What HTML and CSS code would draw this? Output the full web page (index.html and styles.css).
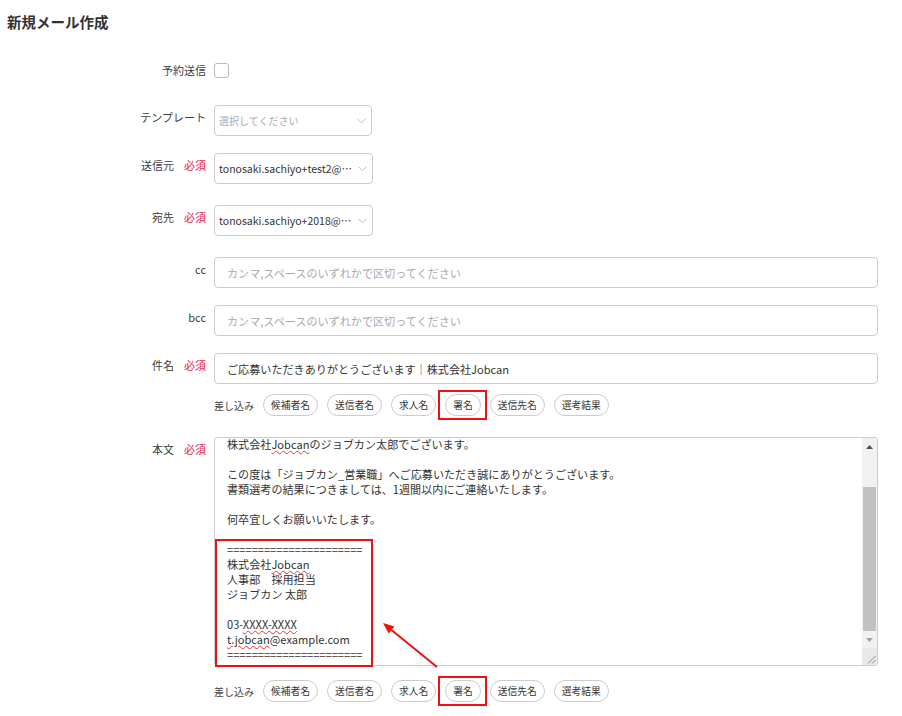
FILE: index.html
```html
<!DOCTYPE html>
<html lang="ja">
<head>
<meta charset="utf-8">
<title>新規メール作成</title>
<link rel="stylesheet" href="styles.css">
</head>
<body>
<div class="page">
  <h1 class="title">新規メール作成</h1>
  <div class="form">
    <div class="row row-check mt-31">
      <div class="label">予約送信</div>
      <div class="field"><span class="checkbox"></span></div>
    </div>

    <div class="row mt-27">
      <div class="label">テンプレート</div>
      <div class="field">
        <div class="select select-template">
          <span class="select-text placeholder small">選択してください</span>
          <svg class="chevron" width="9" height="6" viewBox="0 0 9 6"><polyline points="0.5,0.8 4.5,4.8 8.5,0.8" fill="none" stroke="#bbb" stroke-width="1"/></svg>
        </div>
      </div>
    </div>

    <div class="row mt-17">
      <div class="label">送信元<span class="req">必須</span></div>
      <div class="field">
        <div class="select">
          <span class="select-text">tonosaki.sachiyo+test2@example.com</span>
          <svg class="chevron" width="9" height="6" viewBox="0 0 9 6"><polyline points="0.5,0.8 4.5,4.8 8.5,0.8" fill="none" stroke="#bbb" stroke-width="1"/></svg>
        </div>
      </div>
    </div>

    <div class="row mt-21">
      <div class="label">宛先<span class="req">必須</span></div>
      <div class="field">
        <div class="select">
          <span class="select-text">tonosaki.sachiyo+2018@dummy.example.com</span>
          <svg class="chevron" width="9" height="6" viewBox="0 0 9 6"><polyline points="0.5,0.8 4.5,4.8 8.5,0.8" fill="none" stroke="#bbb" stroke-width="1"/></svg>
        </div>
      </div>
    </div>

    <div class="row mt-21">
      <div class="label">cc</div>
      <div class="field"><div class="input placeholder">カンマ,スペースのいずれかで区切ってください</div></div>
    </div>

    <div class="row mt-17">
      <div class="label">bcc</div>
      <div class="field"><div class="input placeholder">カンマ,スペースのいずれかで区切ってください</div></div>
    </div>

    <div class="row mt-17">
      <div class="label">件名<span class="req">必須</span></div>
      <div class="field"><div class="input">ご応募いただきありがとうございます｜株式会社Jobcan</div></div>
    </div>

    <div class="row mt-10">
      <div class="label"></div>
      <div class="field">
        <div class="inserts">
          <span class="inserts-label">差し込み</span>
          <span class="pill">候補者名</span>
          <span class="pill">送信者名</span>
          <span class="pill">求人名</span>
          <span class="pill marked">署名</span>
          <span class="pill">送信先名</span>
          <span class="pill">選考結果</span>
        </div>
      </div>
    </div>

    <div class="row mt-21">
      <div class="label">本文<span class="req">必須</span></div>
      <div class="field">
        <div class="body-wrap">
          <div class="textarea">
            <div class="textarea-content">
              <div class="lines">
                <div class="line">株式会社<span class="spell">Jobcan</span>のジョブカン太郎でございます。</div>
                <div class="line"></div>
                <div class="line">この度は「ジョブカン_営業職」へご応募いただき誠にありがとうございます。</div>
                <div class="line">書類選考の結果につきましては、1週間以内にご連絡いたします。</div>
                <div class="line"></div>
                <div class="line">何卒宜しくお願いいたします。</div>
                <div class="line"></div>
                <div class="line">======================</div>
                <div class="line">株式会社<span class="spell">Jobcan</span></div>
                <div class="line">人事部　採用担当</div>
                <div class="line">ジョブカン 太郎</div>
                <div class="line"></div>
                <div class="line">03-<span class="spell">XXXX-XXXX</span></div>
                <div class="line"><span class="spell">t.jobcan</span>@example.com</div>
                <div class="line">======================</div>
              </div>
            </div>
            <div class="scrollbar">
              <div class="sb-btn">
                <svg width="7" height="4" viewBox="0 0 7 4"><polygon points="3.5,0 7,4 0,4" fill="#505050"/></svg>
              </div>
              <div class="sb-track"><div class="sb-thumb"></div></div>
              <div class="sb-btn">
                <svg width="7" height="4" viewBox="0 0 7 4"><polygon points="0,0 7,0 3.5,4" fill="#a3a3a3"/></svg>
              </div>
              <div class="sb-corner">
                <svg width="15" height="17" viewBox="0 0 15 17"><line x1="13.5" y1="8" x2="6" y2="15.5" stroke="#888" stroke-width="1"/><line x1="13.5" y1="12" x2="10" y2="15.5" stroke="#888" stroke-width="1"/></svg>
              </div>
            </div>
          </div>
          <div class="sig-box"></div>
          <svg class="arrow" width="70" height="60" viewBox="0 0 70 60">
            <line x1="63" y1="52" x2="17.5" y2="15" stroke="#ee1111" stroke-width="2"/>
            <polygon points="9,8 20.4,11.5 14.7,18.4" fill="#ee1111"/>
          </svg>
        </div>
      </div>
    </div>

    <div class="row mt-14">
      <div class="label"></div>
      <div class="field">
        <div class="inserts">
          <span class="inserts-label">差し込み</span>
          <span class="pill">候補者名</span>
          <span class="pill">送信者名</span>
          <span class="pill">求人名</span>
          <span class="pill marked">署名</span>
          <span class="pill">送信先名</span>
          <span class="pill">選考結果</span>
        </div>
      </div>
    </div>
  </div>
</div>
</body>
</html>
```

FILE: styles.css
```css
html, body {
  margin: 0;
  background: #fff;
}
body {
  font-family: "Noto Sans CJK JP", "Noto Sans", sans-serif;
  color: #333;
}
.page {
  padding: 12px 24px 14px 7px;
}
.title {
  margin: 0;
  font-size: 14.5px;
  line-height: 20px;
  font-weight: 700;
  color: #333;
}

.row {
  display: grid;
  grid-template-columns: 199px 1fr;
  column-gap: 8px;
  align-items: start;
}
.mt-10 { margin-top: 10px; }
.mt-14 { margin-top: 14px; }
.mt-17 { margin-top: 17px; }
.mt-21 { margin-top: 21px; }
.mt-27 { margin-top: 27px; }
.mt-31 { margin-top: 31px; }

.label {
  text-align: right;
  font-size: 11px;
  line-height: 16px;
  padding-top: 4px;
  color: #3d3d3d;
  white-space: nowrap;
}
.req {
  color: #e8243c;
  margin-left: 10px;
}
.row-check {
  align-items: center;
}
.row-check .label {
  padding-top: 0;
  line-height: 15px;
}
.checkbox {
  display: block;
  width: 15px;
  height: 15px;
  box-sizing: border-box;
  border: 1px solid #bbb;
  border-radius: 3px;
  background: #fff;
}

.select {
  width: 159px;
  height: 31px;
  box-sizing: border-box;
  border: 1px solid #ccc;
  border-radius: 4px;
  display: flex;
  align-items: center;
  padding: 0 5px 0 4px;
  font-size: 10.5px;
  background: #fff;
}
.select-template {
  width: 158px;
}
.select-text {
  flex: 1;
  min-width: 0;
  overflow: hidden;
  white-space: nowrap;
  text-overflow: ellipsis;
}
.small {
  font-size: 10px;
}
.chevron {
  flex: none;
  margin-left: 6px;
}
.placeholder {
  color: #aaa;
}
.input {
  height: 31px;
  box-sizing: border-box;
  border: 1px solid #ccc;
  border-radius: 4px;
  display: flex;
  align-items: center;
  padding: 0 13px 0 12px;
  font-size: 11.1px;
  white-space: nowrap;
}

.inserts {
  display: flex;
  align-items: center;
  gap: 9px;
  font-size: 9.75px;
  height: 22px;
}
.inserts-label {
  color: #444;
  font-size: 10px;
}
.pill {
  position: relative;
  height: 22px;
  box-sizing: border-box;
  border: 1px solid #ccc;
  border-radius: 11px;
  padding: 0 7px;
  display: flex;
  align-items: center;
  color: #333;
  background: #fff;
}
.pill.marked::after {
  content: "";
  position: absolute;
  top: -5px;
  bottom: -5px;
  left: -8px;
  right: -7px;
  border: 2px solid #ee1111;
}

.body-wrap {
  position: relative;
}
.textarea {
  height: 229px;
  box-sizing: border-box;
  border: 1px solid #ccc;
  border-radius: 3px;
  display: flex;
  overflow: hidden;
  background: #fff;
}
.textarea-content {
  flex: 1;
  min-width: 0;
  overflow: hidden;
  padding: 0 12px;
  font-size: 11.1px;
  line-height: 15px;
  color: #333;
}
.lines {
  margin-top: -1px;
}
.line {
  height: 15px;
  white-space: nowrap;
}
.spell {
  text-decoration: underline wavy #e33;
  text-decoration-thickness: 1px;
  text-underline-offset: 1px;
}
.scrollbar {
  width: 15px;
  flex: none;
  display: flex;
  flex-direction: column;
  background: #f1f1f1;
}
.sb-btn {
  height: 17px;
  display: flex;
  align-items: center;
  justify-content: center;
}
.sb-track {
  flex: 1;
  padding: 32px 1px 0 1px;
  display: flex;
  flex-direction: column;
}
.sb-thumb {
  flex: 1;
  background: #c1c1c1;
}
.sb-corner {
  height: 17px;
  background: #e9e9e9;
}
.sb-corner svg {
  display: block;
}
.sig-box {
  position: absolute;
  left: 1px;
  top: 102px;
  width: 158px;
  height: 128px;
  box-sizing: border-box;
  border: 2px solid #ee1111;
}
.arrow {
  position: absolute;
  left: 160px;
  top: 178px;
}
```
